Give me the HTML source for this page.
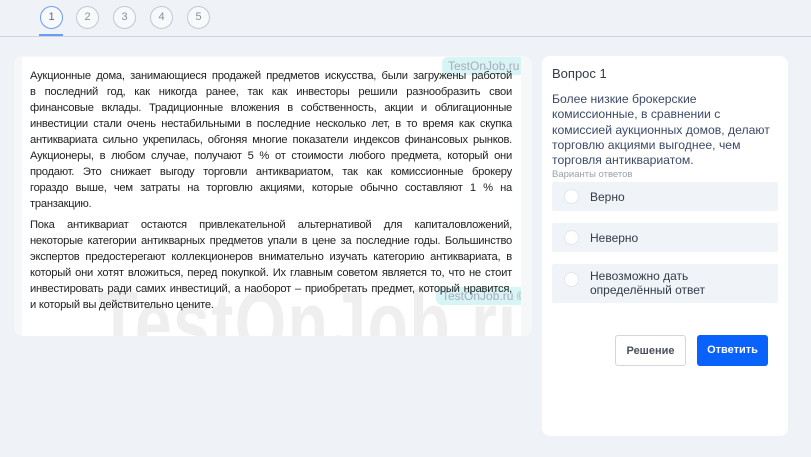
<!DOCTYPE html><html><head><meta charset="utf-8"><style>
*{margin:0;padding:0;box-sizing:border-box}
body{width:811px;height:457px;background:#eff2f7;font-family:"Liberation Sans",sans-serif;position:relative;overflow:hidden}
.c{position:absolute;top:6px;width:23px;height:23px;border:1px solid #c3c8d2;border-radius:50%;font-size:11px;color:#8a909c;text-align:center;line-height:21px;background:#f8f9fb}
.c.a{border-color:#6a9cf5;color:#5a6a90}
.hl{position:absolute;top:36px;left:0;width:811px;height:1px;background:#cfd5df}
.ul{position:absolute;top:34px;left:39px;width:24px;height:2px;background:#6a9cf5}
.lc{position:absolute;left:14px;top:56px;width:518px;height:280px;background:#f6f7f9;border-radius:8px}
.img{position:absolute;left:22px;top:57px;width:499px;height:279px;background:#fff;overflow:hidden}
.t{position:absolute;left:8px;width:482px;font-size:11.2px;color:#222;line-height:16px;letter-spacing:-0.25px}
.t div{text-align:justify;text-align-last:justify;white-space:nowrap;height:16px}
.t div.l{text-align-last:left}
.wm{position:absolute;left:76px;top:215px;font-size:88px;color:#efefef;font-weight:bold;letter-spacing:2px;transform:scaleX(0.75);transform-origin:left;white-space:nowrap}
.bd{position:absolute;background:#d8f5f5;color:#aab;font-size:12px;border-radius:6px;padding:2px 6px;white-space:nowrap}
.rc{position:absolute;left:542px;top:56px;width:246px;height:380px;background:#fff;border-radius:8px}
.o{position:absolute;left:10px;width:226px;background:#f0f3f8;border-radius:2px;font-size:12px;color:#333a48}
.o i{position:absolute;left:12px;width:15px;height:15px;border-radius:50%;background:#fff;border:1px solid #e3e6ec}
.o span{position:absolute;left:38px}
.b{position:absolute;top:279px;height:31px;width:71px;border-radius:3px;font-size:11px;font-weight:bold;text-align:center;line-height:30px}
</style></head><body>
<div class="c a" style="left:40px">1</div><div class="c" style="left:76px">2</div><div class="c" style="left:113px">3</div><div class="c" style="left:150px">4</div><div class="c" style="left:187px">5</div>
<div class="hl"></div><div class="ul"></div>
<div class="lc"></div>
<div class="img">
<div class="wm">TestOnJob.ru</div>
<div class="bd" style="left:420px;top:0px">TestOnJob.ru ©</div>
<div class="bd" style="left:414px;top:230px">TestOnJob.ru ©</div>
<div class="t" style="top:11px">
<div>Аукционные дома, занимающиеся продажей предметов искусства, были загружены работой</div>
<div>в последний год, как никогда ранее, так как инвесторы решили разнообразить свои</div>
<div>финансовые вклады. Традиционные вложения в собственность, акции и облигационные</div>
<div>инвестиции стали очень нестабильными в последние несколько лет, в то время как скупка</div>
<div>антиквариата сильно укрепилась, обгоняя многие показатели индексов финансовых рынков.</div>
<div>Аукционеры, в любом случае, получают 5 % от стоимости любого предмета, который они</div>
<div>продают. Это снижает выгоду торговли антиквариатом, так как комиссионные брокеру</div>
<div>гораздо выше, чем затраты на торговлю акциями, которые обычно составляют 1 % на</div>
<div class="l">транзакцию.</div>
</div>
<div class="t" style="top:160px">
<div>Пока антиквариат остаются привлекательной альтернативой для капиталовложений,</div>
<div>некоторые категории антикварных предметов упали в цене за последние годы. Большинство</div>
<div>экспертов предостерегают коллекционеров внимательно изучать категорию антиквариата, в</div>
<div>который они хотят вложиться, перед покупкой. Их главным советом является то, что не стоит</div>
<div>инвестировать ради самих инвестиций, а наоборот – приобретать предмет, который нравится,</div>
<div class="l">и который вы действительно цените.</div>
</div>
</div>
<div class="rc">
<div style="position:absolute;left:10px;top:10px;font-size:13px;color:#333a48">Вопрос 1</div>
<div style="position:absolute;left:10px;top:36px;width:236px;font-size:12.2px;line-height:15.3px;color:#3d4a66;white-space:nowrap">Более низкие брокерские<br>комиссионные, в сравнении с<br>комиссией аукционных домов, делают<br>торговлю акциями выгоднее, чем<br>торговля антиквариатом.</div>
<div style="position:absolute;left:10px;top:113px;font-size:9.5px;color:#9aa0aa">Варианты ответов</div>
<div class="o" style="top:126px;height:29px"><i style="top:7px"></i><span style="top:8px">Верно</span></div>
<div class="o" style="top:167px;height:29px"><i style="top:7px"></i><span style="top:8px">Неверно</span></div>
<div class="o" style="top:208px;height:39px"><i style="top:8px"></i><span style="top:6px;line-height:13.5px">Невозможно дать<br>определённый ответ</span></div>
<div class="b" style="left:73px;border:1px solid #d3d6dd;color:#4a4f5a;background:#fff">Решение</div>
<div class="b" style="left:155px;background:#0862fb;color:#fff">Ответить</div>
</div>
</body></html>
